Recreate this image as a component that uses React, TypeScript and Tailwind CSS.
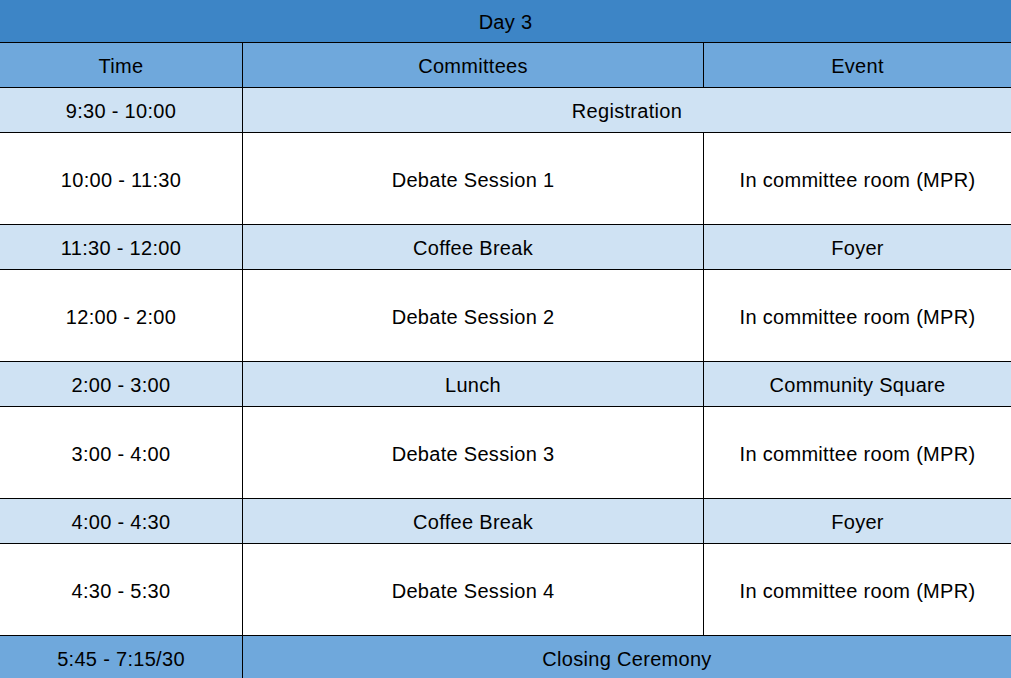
import React from "react";

type Row = { time: string; a: string; b?: string; kind: "light" | "white" | "mid" };

const rows: Row[] = [
  { time: "9:30 - 10:00", a: "Registration", kind: "light" },
  { time: "10:00 - 11:30", a: "Debate Session 1", b: "In committee room (MPR)", kind: "white" },
  { time: "11:30 - 12:00", a: "Coffee Break", b: "Foyer", kind: "light" },
  { time: "12:00 - 2:00", a: "Debate Session 2", b: "In committee room (MPR)", kind: "white" },
  { time: "2:00 - 3:00", a: "Lunch", b: "Community Square", kind: "light" },
  { time: "3:00 - 4:00", a: "Debate Session 3", b: "In committee room (MPR)", kind: "white" },
  { time: "4:00 - 4:30", a: "Coffee Break", b: "Foyer", kind: "light" },
  { time: "4:30 - 5:30", a: "Debate Session 4", b: "In committee room (MPR)", kind: "white" },
  { time: "5:45 - 7:15/30", a: "Closing Ceremony", kind: "mid" },
];

export default function App() {
  return (
    <div
      className="w-[1011px] h-[678px] overflow-hidden bg-white text-black text-[20px] leading-none tracking-[0.3px]"
      style={{ fontFamily: '"Liberation Sans", Arial, sans-serif' }}
    >
      <div className="flex h-[43px] pt-px items-center justify-center bg-[#3d85c6] border-b border-black">
        Day 3
      </div>
      <div className="flex h-[45px] bg-[#6fa8dc] border-b border-black">
        <div className="w-[243px] pt-[2px] border-r border-black flex items-center justify-center">Time</div>
        <div className="w-[461px] pt-[2px] border-r border-black flex items-center justify-center">Committees</div>
        <div className="flex-1 pt-[2px] flex items-center justify-center">Event</div>
      </div>
      {rows.map((r, i) => {
        const bg =
          r.kind === "light" ? "bg-[#cfe2f3]" : r.kind === "mid" ? "bg-[#6fa8dc]" : "bg-white";
        const h = r.kind === "white" ? "h-[92px]" : "h-[45px]";
        return (
          <div key={i} className={`flex ${h} ${bg} border-b border-black`}>
            <div className="w-[243px] pt-[2px] border-r border-black flex items-center justify-center">
              {r.time}
            </div>
            {r.b ? (
              <>
                <div className="w-[461px] pt-[2px] border-r border-black flex items-center justify-center">
                  {r.a}
                </div>
                <div className="flex-1 pt-[2px] flex items-center justify-center">{r.b}</div>
              </>
            ) : (
              <div className="flex-1 pt-[2px] flex items-center justify-center">{r.a}</div>
            )}
          </div>
        );
      })}
    </div>
  );
}
